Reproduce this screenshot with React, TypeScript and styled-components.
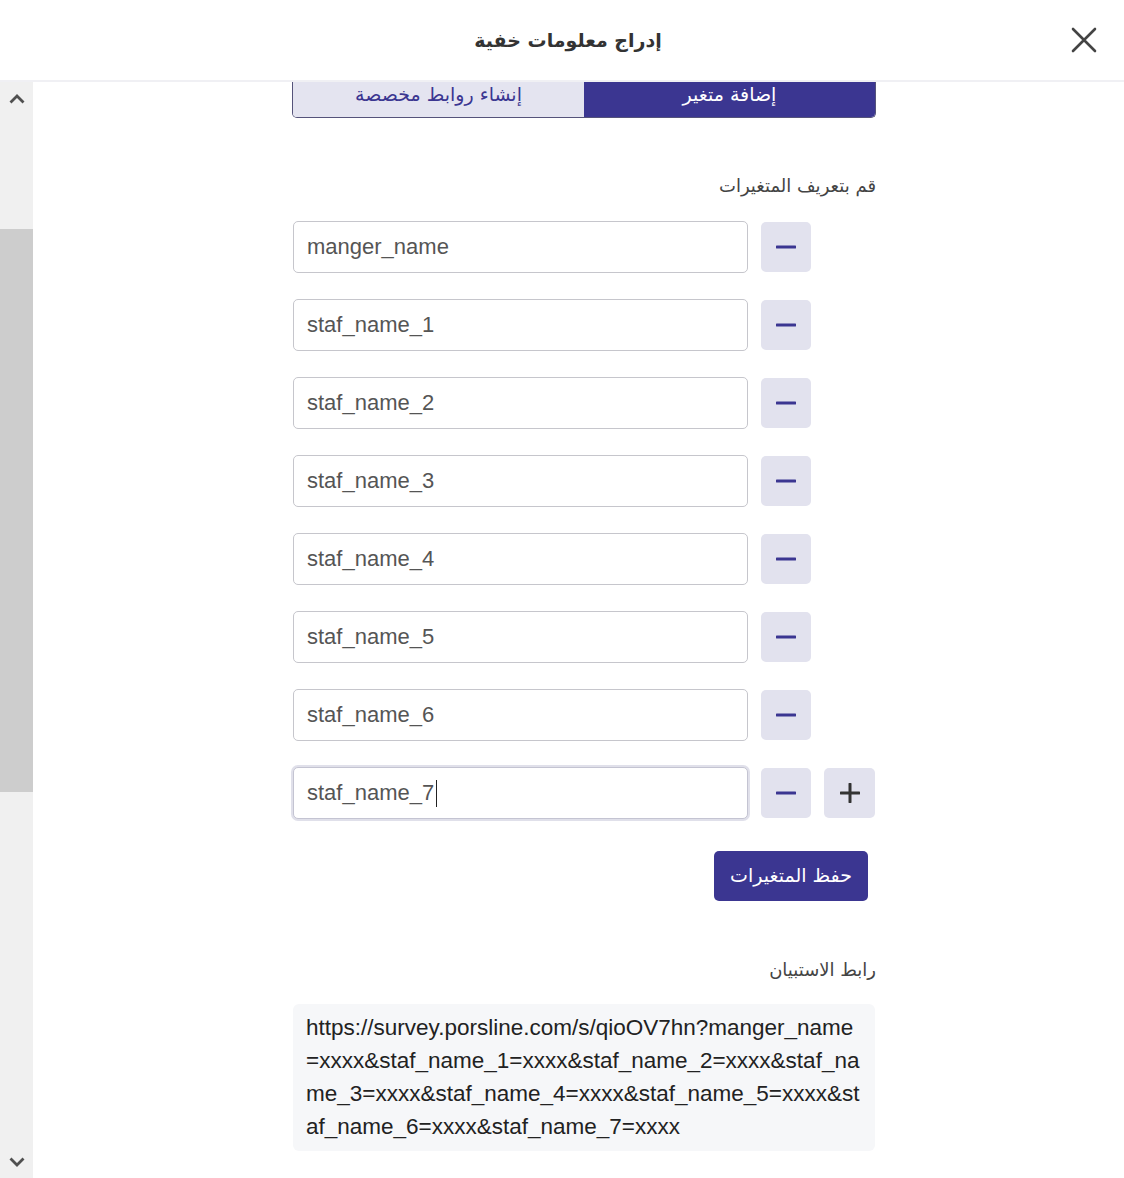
import React from "react";
import styled, { createGlobalStyle } from "styled-components";

const GlobalStyle = createGlobalStyle`
  html, body {
    margin: 0;
    padding: 0;
    background: #ffffff;
  }
  body {
    font-family: "Liberation Sans", "DejaVu Sans", sans-serif;
    color: #333;
  }
  * {
    box-sizing: border-box;
  }
`;

const PRIMARY = "#3b3691";

const variables = [
  "manger_name",
  "staf_name_1",
  "staf_name_2",
  "staf_name_3",
  "staf_name_4",
  "staf_name_5",
  "staf_name_6",
  "staf_name_7",
];

const linkLines = [
  "https://survey.porsline.com/s/qioOV7hn?manger_name",
  "=xxxx&staf_name_1=xxxx&staf_name_2=xxxx&staf_na",
  "me_3=xxxx&staf_name_4=xxxx&staf_name_5=xxxx&st",
  "af_name_6=xxxx&staf_name_7=xxxx",
];

function CloseIcon() {
  return (
    <svg width="26" height="26" viewBox="0 0 26 26">
      <path d="M2 2 L24 24 M24 2 L2 24" stroke="#444" strokeWidth="2.6" strokeLinecap="round" />
    </svg>
  );
}

function Chevron({ up }: { up?: boolean }) {
  return (
    <svg width="16" height="10" viewBox="0 0 16 10">
      <path
        d={up ? "M1.5 8.5 L8 2 L14.5 8.5" : "M1.5 1.5 L8 8 L14.5 1.5"}
        stroke="#505050"
        strokeWidth="2.8"
        fill="none"
      />
    </svg>
  );
}

function MinusIcon() {
  return (
    <svg width="20" height="20" viewBox="0 0 20 20">
      <path d="M1 10 H19" stroke={PRIMARY} strokeWidth="3" strokeLinecap="round" />
    </svg>
  );
}

function PlusIcon() {
  return (
    <svg width="20" height="20" viewBox="0 0 20 20">
      <path d="M1 10 H19 M10 1 V19" stroke="#333" strokeWidth="3" strokeLinecap="round" />
    </svg>
  );
}

function App() {
  return (
    <>
      <GlobalStyle />
      <Page>
        <Header>
          <Title>إدراج معلومات خفية</Title>
          <CloseButton aria-label="close">
            <CloseIcon />
          </CloseButton>
        </Header>
        <Body>
          <ScrollTrack>
            <ScrollArrow>
              <Chevron up />
            </ScrollArrow>
            <ScrollThumb />
            <ScrollSpacer />
            <ScrollArrow>
              <Chevron />
            </ScrollArrow>
          </ScrollTrack>
          <Main>
            <Column dir="rtl">
              <Tabs>
                <Tab $active>إضافة متغير</Tab>
                <Tab>إنشاء روابط مخصصة</Tab>
              </Tabs>

              <SectionLabel>قم بتعريف المتغيرات</SectionLabel>

              <VarList>
                {variables.map((name, i) => {
                  const last = i === variables.length - 1;
                  return (
                    <VarRow key={name}>
                      <SlotCell>
                        {last && (
                          <IconButton $wide aria-label="add">
                            <PlusIcon />
                          </IconButton>
                        )}
                      </SlotCell>
                      <IconButton aria-label="remove">
                        <MinusIcon />
                      </IconButton>
                      <InputWrap>
                        <VarInput dir="ltr" defaultValue={name} $focused={last} />
                        {last && <Caret />}
                      </InputWrap>
                    </VarRow>
                  );
                })}
              </VarList>

              <SaveButton>حفظ المتغيرات</SaveButton>

              <LinkLabel>رابط الاستبيان</LinkLabel>

              <LinkBox dir="ltr">
                {linkLines.map((line) => (
                  <LinkLine key={line}>{line}</LinkLine>
                ))}
              </LinkBox>
            </Column>
          </Main>
        </Body>
      </Page>
    </>
  );
}

const Page = styled.div`
  width: 1124px;
  height: 1178px;
  display: flex;
  flex-direction: column;
  overflow: hidden;
  background: #fff;
`;

const Header = styled.header`
  position: relative;
  z-index: 2;
  height: 82px;
  flex-shrink: 0;
  display: flex;
  align-items: center;
  justify-content: center;
  padding-left: 12px;
  background: #fff;
  border-bottom: 2px solid #f0f0f4;
`;

const Title = styled.h1`
  margin: 0;
  font-family: "DejaVu Sans", sans-serif;
  font-size: 19px;
  font-weight: 700;
  color: #333;
`;

const CloseButton = styled.button`
  position: absolute;
  right: 26px;
  top: 26px;
  width: 28px;
  height: 28px;
  padding: 0;
  border: none;
  background: transparent;
  display: flex;
  align-items: center;
  justify-content: center;
`;

const Body = styled.div`
  flex: 1;
  display: flex;
  min-height: 0;
`;

const ScrollTrack = styled.div`
  width: 33px;
  flex-shrink: 0;
  background: #f0f0f0;
  display: flex;
  flex-direction: column;
`;

const ScrollArrow = styled.div`
  height: 33px;
  display: flex;
  align-items: center;
  justify-content: center;
`;

const ScrollThumb = styled.div`
  margin-top: 114px;
  height: 563px;
  background: #cdcdcd;
`;

const ScrollSpacer = styled.div`
  flex: 1;
`;

const Main = styled.main`
  flex: 1;
  overflow: hidden;
  padding: 0 248px 0 259px;
`;

const Column = styled.div`
  width: 584px;
  display: flex;
  flex-direction: column;
  align-items: stretch;
  margin-top: -8px;
`;

const Tabs = styled.div`
  display: flex;
  height: 44px;
  border: 1px solid #55537a;
  border-top: none;
  border-radius: 0 0 5px 5px;
  overflow: hidden;
`;

const Tab = styled.div<{ $active?: boolean }>`
  flex: 1;
  display: flex;
  align-items: center;
  justify-content: center;
  padding-bottom: 4px;
  font-family: "DejaVu Sans", sans-serif;
  font-size: 19px;
  background: ${(p) => (p.$active ? PRIMARY : "#e4e4f0")};
  color: ${(p) => (p.$active ? "#fff" : PRIMARY)};
`;

const SectionLabel = styled.div`
  margin-top: 53px;
  line-height: 30px;
  font-family: "DejaVu Sans", sans-serif;
  font-size: 18px;
  color: #444;
`;

const VarList = styled.div`
  margin: 20px 1px 0 0;
  display: flex;
  flex-direction: column;
  gap: 26px;
`;

const VarRow = styled.div`
  display: grid;
  grid-template-columns: 51px 50px 455px;
  column-gap: 13px;
  align-items: center;
  height: 52px;
`;

const SlotCell = styled.div`
  display: flex;
`;

const IconButton = styled.button<{ $wide?: boolean }>`
  width: ${(p) => (p.$wide ? "51px" : "50px")};
  height: 50px;
  padding: 0;
  border: none;
  border-radius: 5px;
  background: #e2e2ee;
  display: flex;
  align-items: center;
  justify-content: center;
`;

const InputWrap = styled.div`
  position: relative;
  width: 455px;
  height: 52px;
`;

const VarInput = styled.input<{ $focused?: boolean }>`
  width: 455px;
  height: 52px;
  padding: 0 13px;
  border: 1px solid ${(p) => (p.$focused ? "#c4c4d2" : "#c6c6cc")};
  border-radius: 5px;
  box-shadow: ${(p) => (p.$focused ? "0 0 0 2px #e0e0ea" : "none")};
  font-family: "Liberation Sans", sans-serif;
  font-size: 22px;
  color: #555;
  text-align: left;
  outline: none;
  background: #fff;
`;

const Caret = styled.span`
  position: absolute;
  left: 143px;
  top: 13px;
  width: 1px;
  height: 27px;
  background: #222;
`;

const SaveButton = styled.button`
  align-self: flex-start;
  margin: 32px 8px 0 0;
  width: 154px;
  height: 50px;
  border: none;
  border-radius: 5px;
  background: ${PRIMARY};
  color: #fff;
  font-family: "DejaVu Sans", sans-serif;
  font-size: 19px;
  padding: 0 0 3px;
`;

const LinkLabel = styled.div`
  margin-top: 54px;
  line-height: 30px;
  font-family: "DejaVu Sans", sans-serif;
  font-size: 18px;
  color: #444;
`;

const LinkBox = styled.div`
  margin: 19px 1px 0 0;
  width: 582px;
  padding: 7px 13px 8px;
  border-radius: 6px;
  background: #f6f7f9;
  text-align: left;
  font-family: "Liberation Sans", sans-serif;
  font-size: 22.5px;
  line-height: 33px;
  color: #222;
`;

const LinkLine = styled.div`
  white-space: nowrap;
`;

export default App;
